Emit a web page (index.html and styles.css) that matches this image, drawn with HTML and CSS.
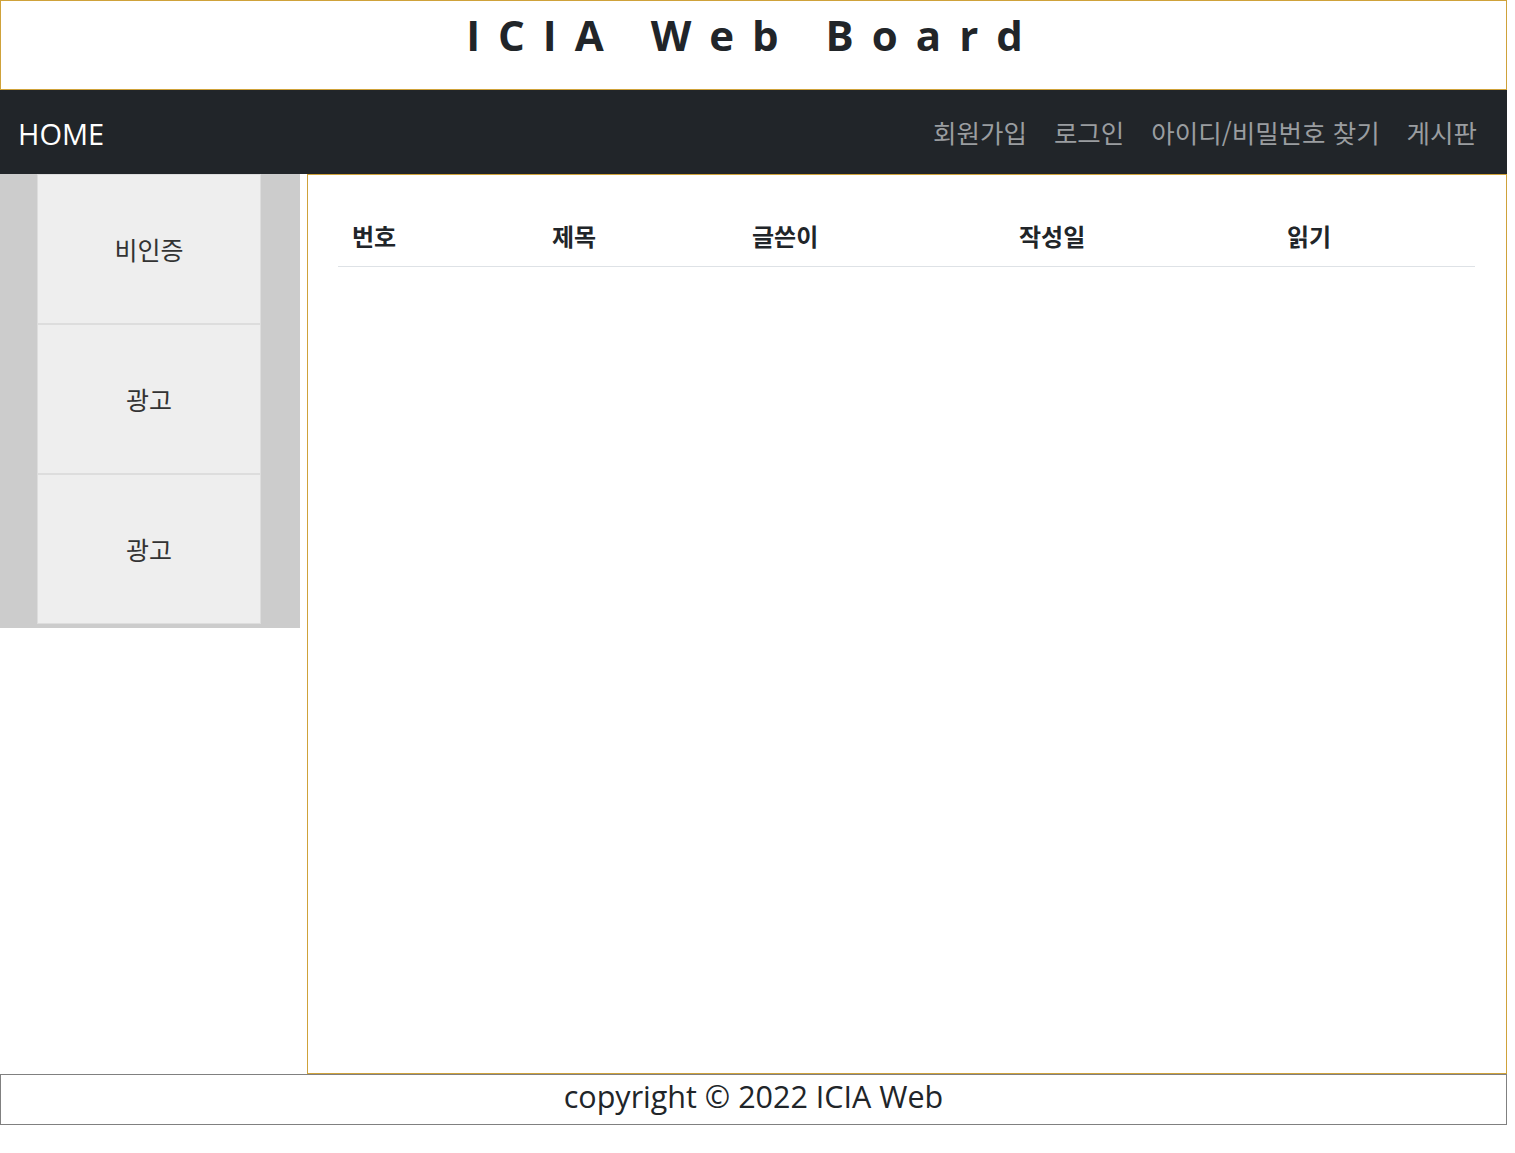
FILE: index.html
```html
<!DOCTYPE html>
<html lang="ko">
<head>
<meta charset="utf-8">
<title>ICIA Web Board</title>
<link rel="stylesheet" href="styles.css">
</head>
<body>
<div class="page">
  <header class="top">
    <h1 class="title">ICIA Web Board</h1>
  </header>
  <nav class="navbar">
    <a class="brand" href="#">HOME</a>
    <ul class="menu">
      <li><a href="#">회원가입</a></li>
      <li><a href="#">로그인</a></li>
      <li><a href="#">아이디/비밀번호 찾기</a></li>
      <li><a href="#">게시판</a></li>
    </ul>
  </nav>
  <div class="main">
    <aside class="side">
      <div class="box">비인증</div>
      <div class="box">광고</div>
      <div class="box">광고</div>
    </aside>
    <section class="content">
      <table class="board">
        <thead>
          <tr>
            <th class="c1">번호</th>
            <th class="c2">제목</th>
            <th class="c3">글쓴이</th>
            <th class="c4">작성일</th>
            <th class="c5">읽기</th>
          </tr>
        </thead>
        <tbody></tbody>
      </table>
    </section>
  </div>
  <footer class="foot">copyright © 2022 ICIA Web</footer>
</div>
</body>
</html>
```
FILE: styles.css
```css
* { box-sizing: border-box; }
body {
  margin: 0;
  font-family: "Open Sans", "Noto Sans CJK KR", sans-serif;
  color: #212529;
  background: #fff;
}
.page { width: 1507px; }
.top {
  height: 90px;
  border: 1px solid #cfa23a;
  display: flex;
  justify-content: center;
  align-items: flex-start;
}
.title {
  margin: 8px 0 0 0;
  font-size: 42px;
  line-height: 52px;
  font-weight: 700;
  letter-spacing: 18px;
  color: #212529;
}
.navbar {
  height: 84px;
  background: #212529;
  display: flex;
  align-items: center;
  justify-content: space-between;
  padding: 0 30px 0 18px;
}
.brand {
  color: #fff;
  text-decoration: none;
  font-size: 29px;
  line-height: 40px;
  margin-top: 4px;
}
.menu {
  list-style: none;
  margin: 0;
  padding: 0;
  display: flex;
  gap: 27px;
}
.menu a {
  color: #9a9da0;
  text-decoration: none;
  font-size: 25.5px;
  line-height: 34px;
  font-family: "Noto Sans CJK KR", sans-serif;
}
.main { display: flex; align-items: flex-start; }
.side {
  width: 300px;
  background: #ccc;
  padding: 0 39px 4px 37px;
}
.box {
  height: 150px;
  background: #eee;
  border: 1px solid #ddd;
  display: flex;
  align-items: center;
  justify-content: center;
  font-size: 25px;
  color: #333;
  font-family: "Noto Sans CJK KR", sans-serif;
  font-weight: 400;
}
.content {
  margin-left: 7px;
  width: 1200px;
  height: 900px;
  border: 1px solid #cfa23a;
  padding: 30px 30px 0 30px;
}
.board {
  width: 1137px;
  border-collapse: collapse;
}
.board th {
  text-align: left;
  font-family: "Noto Sans CJK KR", sans-serif;
  font-size: 24px;
  font-weight: 700;
  line-height: 32px;
  padding: 15px 14px 14px 14px;
  border-bottom: 1px solid #dee2e6;
}
.c1 { width: 200px; }
.c2 { width: 200px; }
.c3 { width: 267px; }
.c4 { width: 268px; }
.c5 { width: 202px; }
.foot {
  height: 51px;
  border: 1px solid #808080;
  text-align: center;
  font-size: 30.5px;
  line-height: 42px;
  color: #212529;
}
```
